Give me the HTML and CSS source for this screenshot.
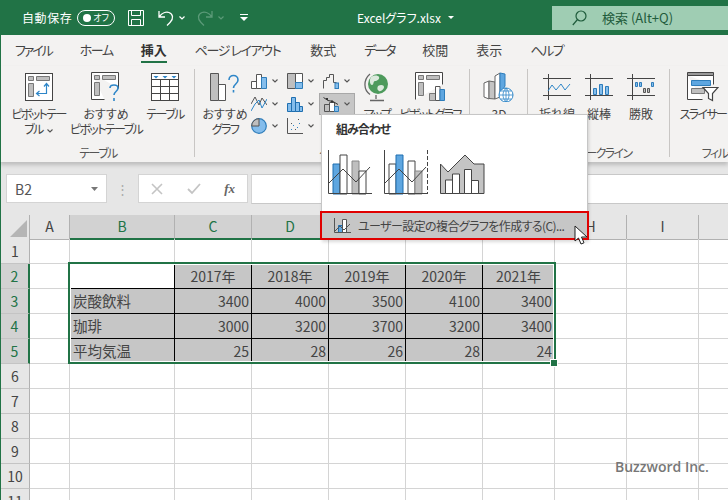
FILE: index.html
```html
<!DOCTYPE html>
<html lang="ja">
<head>
<meta charset="utf-8">
<title>Excelグラフ.xlsx</title>
<link rel="stylesheet" href="styles.css">
</head>
<body>
<div class="app">
  <header class="titlebar">
    <span class="autosave">自動保存</span>
    <span class="toggle"><span class="knob"></span><span class="toggle-text">オフ</span></span>
    <svg class="qa-save" width="16" height="16" viewBox="0 0 16 16" fill="none" stroke="#fff"><path d="M.5.5h15v15H.5zM3.500.5v5h9v-5M3.500 15.500v-6h9v6"/></svg>
    <svg class="qa-undo" width="16" height="16" viewBox="0 0 16 16" fill="none" stroke="#fff" stroke-width="1.300"><path d="M1 1v6h6M1.500 6.500C4 3 8 1.500 11 2.500c4 1.500 5 6 1 10l-3 3"/></svg>
    <svg class="chev" width="6" height="4" viewBox="0 0 6 4" fill="none" stroke="#fff" stroke-width="1.200"><path d="M.5.500 3 3 5.500.5"/></svg>
    <svg class="qa-redo" width="16" height="16" viewBox="0 0 16 16" fill="none" stroke="#5b9a78" stroke-width="1.300"><path d="M15 1v6H9M14.500 6.500C12 3 8 1.500 5 2.500 1 4 0 8.500 4 12.500l3 3"/></svg>
    <svg class="chev" width="6" height="4" viewBox="0 0 6 4" fill="none" stroke="#5b9a78" stroke-width="1.200"><path d="M.5.500 3 3 5.500.5"/></svg>
    <svg class="qa-more" width="8" height="7" viewBox="0 0 8 7" fill="#fff"><path d="M0 0h8v1H0zM0 3h8L4 7z"/></svg>
    <span class="filename">Excelグラフ.xlsx</span>
    <svg class="file-arrow" width="6" height="3" viewBox="0 0 6 3" fill="#fff"><path d="M0 0h6L3 3z"/></svg>
    <div class="search">
      <svg width="15" height="16" viewBox="0 0 15 16" fill="none" stroke="#1f5c3c" stroke-width="1.200"><circle cx="9" cy="6" r="5"/><path d="M5.500 9.500 .8 15"/></svg>
      <span class="search-text">検索 (Alt+Q)</span>
    </div>
  </header>

  <nav class="tabs">
    <span class="tab k2">ファイル</span>
    <span class="tab k">ホーム</span>
    <span class="tab active">挿入</span>
    <span class="tab k tab-gap">ページ レイアウト</span>
    <span class="tab">数式</span>
    <span class="tab k2">データ</span>
    <span class="tab">校閲</span>
    <span class="tab">表示</span>
    <span class="tab k">ヘルプ</span>
  </nav>

  <section class="ribbon">
    <div class="group g-table">
      <div class="group-body">
        <div class="bigbtn w-pivot">
          <svg width="28" height="28" viewBox="0 0 28 28"><rect x=".5" y=".5" width="27" height="27" fill="#fff" stroke="#444"/><path d="M3.500 3.500h5v4h-5zM11.500 3.500h13v4h-13zM3.500 10.500h5v13h-5z" fill="#bfbfbf" stroke="#777"/><path d="M12 20.500h9.500V11M19 13.500l2.500-3 2.500 3M14.500 18l-3 2.500 3 2.500" fill="none" stroke="#2e86c8" stroke-width="1.200"/></svg>
          <span class="lbl lk">ピボットテー<br>ブル <svg class="lbl-chev" width="6" height="4" viewBox="0 0 6 4" fill="none" stroke="#555" stroke-width="1.100"><path d="M.5.500 3 3 5.500.5"/></svg></span>
        </div>
        <div class="bigbtn w-recpivot">
          <svg width="30" height="30" viewBox="0 0 30 30"><path d="M.5.5h27v16M.5.5v27h13" fill="#fff" stroke="#444"/><path d="M3.500 3.500h5v4h-5zM11.500 3.500h13v4h-13zM3.500 10.500h5v13h-5z" fill="#bfbfbf" stroke="#777"/><path d="M19 16c0-4 8-4 8 0 0 3.500-4 3.500-4 7M23 26v3" fill="none" stroke="#2e86c8" stroke-width="1.600"/></svg>
          <span class="lbl">おすすめ<br><span class="lk">ピボットテーブル</span></span>
        </div>
        <div class="bigbtn w-table">
          <svg width="28" height="28" viewBox="0 0 28 28"><rect x=".5" y=".5" width="27" height="27" fill="#fff" stroke="#444"/><path d="M.5 6.500h27M.5 13.500h27M.5 20.500h27M9.500 6.500v21M18.500 6.500v21" stroke="#444" fill="none"/><path d="M2.500 3h5L5 5.500zM11.500 3h5L14 5.500zM20.500 3h5L23 5.500z" fill="#2e86c8"/></svg>
          <span class="lbl lk">テーブル</span>
        </div>
      </div>
      <span class="group-label lk">テーブル</span>
    </div>

    <div class="group g-chart">
      <div class="group-body">
        <div class="bigbtn w-recchart">
          <svg width="30" height="28" viewBox="0 0 30 28"><path d="M.5.500h8v27h-8z" fill="#bfbfbf" stroke="#555"/><path d="M8.500 11.500h7v16h-7z" fill="#fff" stroke="#555"/><path d="M19 7c0-6 9-6 9 0 0 4-4.500 4-4.500 8M23.500 17v2.500" fill="none" stroke="#2e86c8" stroke-width="1.600"/></svg>
          <span class="lbl">おすすめ<br><span class="lk">グラフ</span></span>
        </div>
        <div class="smallgrid">
          <div class="smallbtn">
            <svg width="16" height="16" viewBox="0 0 16 16"><path d="M.5 8.500h5v7h-5z" fill="#fff" stroke="#555"/><path d="M5.500 1.500h5v14h-5z" fill="#fff" stroke="#555"/><path d="M10.500 4.500h5v11h-5z" fill="#84bdec" stroke="#2e7dba"/></svg>
            <svg class="sm-chev" width="6" height="4" viewBox="0 0 6 4" fill="none" stroke="#555" stroke-width="1.100"><path d="M.5.500 3 3 5.500.5"/></svg>
          </div>
          <div class="smallbtn">
            <svg width="16" height="16" viewBox="0 0 16 16"><path d="M.5.500h8v15h-8z" fill="#bfbfbf" stroke="#555"/><path d="M8.500.500h7v9h-7z" fill="#fff" stroke="#555"/><path d="M8.500 9.500h7v6h-7z" fill="#84bdec" stroke="#2e7dba"/></svg>
            <svg class="sm-chev" width="6" height="4" viewBox="0 0 6 4" fill="none" stroke="#555" stroke-width="1.100"><path d="M.5.500 3 3 5.500.5"/></svg>
          </div>
          <div class="smallbtn">
            <svg width="16" height="16" viewBox="0 0 16 16" fill="none"><path d="M.5 15.500v-8h3v-3h3v-3h4v8h3" stroke="#555"/><rect x="12" y="10" width="3.500" height="5.500" fill="#84bdec" stroke="#2e7dba"/></svg>
            <svg class="sm-chev" width="6" height="4" viewBox="0 0 6 4" fill="none" stroke="#555" stroke-width="1.100"><path d="M.5.500 3 3 5.500.5"/></svg>
          </div>
          <div class="smallbtn">
            <svg width="16" height="16" viewBox="0 0 16 16" fill="none"><path d="M0 8 4 1l4 8 3-7 5 7" stroke="#555"/><path d="M0 15 4 8l4-4 3 8 5-9" stroke="#2e86c8"/></svg>
            <svg class="sm-chev" width="6" height="4" viewBox="0 0 6 4" fill="none" stroke="#555" stroke-width="1.100"><path d="M.5.500 3 3 5.500.5"/></svg>
          </div>
          <div class="smallbtn">
            <svg width="16" height="16" viewBox="0 0 16 16"><path d="M.5 7.500h4v8h-4zM4.500 1.500h4v14h-4zM8.500 6.500h4v9h-4zM12.500 10.500h3v5h-3z" fill="#84bdec" stroke="#1f6fb0"/></svg>
            <svg class="sm-chev" width="6" height="4" viewBox="0 0 6 4" fill="none" stroke="#555" stroke-width="1.100"><path d="M.5.500 3 3 5.500.5"/></svg>
          </div>
          <div class="smallbtn selected">
            <svg width="16" height="16" viewBox="0 0 16 16" fill="none"><path d="M1.500 8.500h5v7h-5z" fill="#bfbfbf" stroke="#555"/><path d="M6.500 6.500h5v9h-5z" fill="#fff" stroke="#555"/><path d="M11.500 10.500h4v5h-4z" fill="#84bdec" stroke="#2e7dba"/><path d="M.5 1.500 5 4.500l5 1 5 3" stroke="#333"/><path d="M3 2h2v2H3zM8 4.500h2v2H8z" fill="#333"/></svg>
            <svg class="sm-chev" width="6" height="4" viewBox="0 0 6 4" fill="none" stroke="#555" stroke-width="1.100"><path d="M.5.500 3 3 5.500.5"/></svg>
          </div>
          <div class="smallbtn">
            <svg width="16" height="16" viewBox="0 0 16 16"><circle cx="8" cy="8" r="7.300" fill="#84bdec" stroke="#2e7dba" stroke-width="1.200"/><path d="M8 8V.7A7.300 7.300 0 0 0 .7 8z" fill="#bfbfbf" stroke="#555"/></svg>
            <svg class="sm-chev" width="6" height="4" viewBox="0 0 6 4" fill="none" stroke="#555" stroke-width="1.100"><path d="M.5.500 3 3 5.500.5"/></svg>
          </div>
          <div class="smallbtn">
            <svg width="16" height="16" viewBox="0 0 16 16"><path d="M.5 0v15.500H16" fill="none" stroke="#555"/><path d="M4 11h1v1H4zM6 7h1v1H6zM10 9h1v1h-1zM12 5h1v1h-1z" fill="#2e86c8"/><path d="M8 11h1v1H8zM4 5h1v1H4zM11 1h1v1h-1z" fill="#555"/></svg>
            <svg class="sm-chev" width="6" height="4" viewBox="0 0 6 4" fill="none" stroke="#555" stroke-width="1.100"><path d="M.5.500 3 3 5.500.5"/></svg>
          </div>
        </div>
        <div class="bigbtn w-map">
          <svg width="26" height="30" viewBox="0 0 26 30"><circle cx="14" cy="12" r="10" fill="#4d9a5c"/><path d="M7 5c3-2 7-2 8 0s-2 4-4 4-1 4-3 4-3-5-1-8zM14 14c3-2 6-1 6 1s-3 5-5 4-2-3-1-5z" fill="#dbe9dd"/><path d="M6 2C-1 8-.5 18 6 22.500M12 23v4M6 28.500h14" fill="none" stroke="#666" stroke-width="1.300"/></svg>
          <span class="lbl lk">マップ</span>
        </div>
        <div class="bigbtn w-pchart">
          <svg width="30" height="30" viewBox="0 0 30 30"><path d="M.5 27.500V.5h27v12" fill="#fff" stroke="#444"/><path d="M3.500 3.500h5v4h-5zM11.500 3.500h13v4h-13zM3.500 10.500h5v13h-5z" fill="#bfbfbf" stroke="#777"/><path d="M14.500 21.500h6v7h-6z" fill="#bfbfbf" stroke="#777"/><path d="M20.500 14.500h4.500v14h-4.500z" fill="#fff" stroke="#555"/><path d="M25 17.500h4.500v11H25z" fill="#5ea6e0" stroke="#2e7dba"/></svg>
          <span class="lbl lk">ピボットグラフ</span>
        </div>
      </div>
      <span class="group-label lk">グラフ</span>
    </div>

    <div class="group g-3d">
      <div class="group-body">
        <div class="bigbtn w-3d">
          <svg width="32" height="30" viewBox="0 0 32 30"><path d="M1 11l5-2v18l-5-2z" fill="#fff" stroke="#666"/><path d="M6 9l6 1v17l-6-.5z" fill="#c4c4c4" stroke="#666"/><path d="M12 4l5-3v24l-5 2z" fill="#fff" stroke="#666"/><path d="M17 1l5 1v12l-5 8z" fill="#5ea6e0" stroke="#2e7dba"/><circle cx="23" cy="23" r="7" fill="#fff" stroke="#2e86c8"/><path d="M16 23h14M18 19h10M18 27h10M23 16v14M23 16c-4 4-4 10 0 14M23 16c4 4 4 10 0 14" fill="none" stroke="#2e86c8" stroke-width=".8"/></svg>
          <span class="lbl">3D</span>
        </div>
      </div>
    </div>

    <div class="group g-spark">
      <div class="group-body">
        <div class="bigbtn w-spark">
          <svg width="28" height="26" viewBox="0 0 28 26" fill="none"><path d="M0 4.500h28M0 21.500h28M5.500 0v26" stroke="#444"/><path d="M5 17 9 11l4 5 5-6 4 6 5-6" stroke="#2e86c8"/></svg>
          <span class="lbl">折れ線</span>
        </div>
        <div class="bigbtn w-spark2">
          <svg width="28" height="26" viewBox="0 0 28 26"><path d="M0 4.500h28M0 21.500h28M5.500 0v26" fill="none" stroke="#444"/><path d="M8.500 14.500h3v6h-3zM14.500 10.500h3v10h-3zM20.500 12.500h3v8h-3z" fill="#84bdec" stroke="#2e7dba"/></svg>
          <span class="lbl">縦棒</span>
        </div>
        <div class="bigbtn w-spark3">
          <svg width="28" height="26" viewBox="0 0 28 26"><path d="M0 4.500h28M0 21.500h28M5.500 0v26" fill="none" stroke="#444"/><path d="M8.500 8.500h2v4h-2zM12.500 8.500h2v4h-2zM24.500 8.500h2v4h-2z" fill="#84bdec" stroke="#2e7dba"/><path d="M16.500 14.500h2v4h-2zM20.500 14.500h2v4h-2z" fill="#bfbfbf" stroke="#555"/></svg>
          <span class="lbl">勝敗</span>
        </div>
      </div>
      <span class="group-label lk">スパークライン</span>
    </div>

    <div class="group g-filter">
      <div class="group-body">
        <div class="bigbtn w-slicer">
          <svg width="32" height="30" viewBox="0 0 32 30"><path d="M.5.500h26v3h-26z" fill="#999" stroke="#444"/><path d="M.5 3.500h26v9M.5 3.500v24h15" fill="#fff" stroke="#444"/><path d="M4.500 8.500h19v5h-19z" fill="#5ea6e0" stroke="#2e7dba"/><path d="M4.500 16.500h13v5h-13z" fill="#bfbfbf" stroke="#777"/><path d="M16 15.500h15l-5.500 6v7l-4-2v-5z" fill="#fff" stroke="#444" stroke-width="1.200"/></svg>
          <span class="lbl lk">スライサー</span>
        </div>
      </div>
      <span class="group-label lk">フィルター</span>
    </div>
  </section>

  <section class="formulabar">
    <div class="namebox"><span>B2</span><svg width="7" height="4" viewBox="0 0 7 4" fill="#777"><path d="M0 0h7L3.500 4z"/></svg></div>
    <span class="fb-dots">⋮</span>
    <div class="fb-buttons">
      <svg width="12" height="12" viewBox="0 0 12 12" fill="none" stroke="#c4c4c4" stroke-width="1.600"><path d="M1 1l10 10M11 1 1 11"/></svg>
      <svg width="14" height="12" viewBox="0 0 14 12" fill="none" stroke="#c4c4c4" stroke-width="1.800"><path d="M1 6l4 4 8-9"/></svg>
      <span class="fx">fx</span>
    </div>
    <div class="fb-input"></div>
  </section>

  <section class="sheet">
    <div class="row head">
      <div class="rh corner"><svg width="17" height="17" viewBox="0 0 17 17" fill="#b5b5b5"><path d="M17 0v17H0z"/></svg></div>
      <div class="ch">A</div><div class="ch on">B</div><div class="ch on">C</div><div class="ch on">D</div><div class="ch on"></div><div class="ch on"></div><div class="ch on"></div><div class="ch">H</div><div class="ch">I</div><div class="ch"></div>
    </div>
    <div class="row"><div class="rh">1</div><div class="c"></div><div class="c"></div><div class="c"></div><div class="c"></div><div class="c"></div><div class="c"></div><div class="c"></div><div class="c"></div><div class="c"></div><div class="c"></div></div>
    <div class="row"><div class="rh on">2</div><div class="c"></div><div class="c d white"></div><div class="c d yr">2017年</div><div class="c d yr">2018年</div><div class="c d yr">2019年</div><div class="c d yr">2020年</div><div class="c d yr">2021年</div><div class="c"></div><div class="c"></div><div class="c"></div></div>
    <div class="row"><div class="rh on">3</div><div class="c"></div><div class="c d name">炭酸飲料</div><div class="c d n">3400</div><div class="c d n">4000</div><div class="c d n">3500</div><div class="c d n">4100</div><div class="c d n">3400</div><div class="c"></div><div class="c"></div><div class="c"></div></div>
    <div class="row"><div class="rh on">4</div><div class="c"></div><div class="c d name">珈琲</div><div class="c d n">3000</div><div class="c d n">3200</div><div class="c d n">3700</div><div class="c d n">3200</div><div class="c d n">3400</div><div class="c"></div><div class="c"></div><div class="c"></div></div>
    <div class="row"><div class="rh on">5</div><div class="c"></div><div class="c d name">平均気温</div><div class="c d n">25</div><div class="c d n">28</div><div class="c d n">26</div><div class="c d n">28</div><div class="c d n">24</div><div class="c"></div><div class="c"></div><div class="c"></div></div>
    <div class="row"><div class="rh">6</div><div class="c"></div><div class="c"></div><div class="c"></div><div class="c"></div><div class="c"></div><div class="c"></div><div class="c"></div><div class="c"></div><div class="c"></div><div class="c"></div></div>
    <div class="row"><div class="rh">7</div><div class="c"></div><div class="c"></div><div class="c"></div><div class="c"></div><div class="c"></div><div class="c"></div><div class="c"></div><div class="c"></div><div class="c"></div><div class="c"></div></div>
    <div class="row"><div class="rh">8</div><div class="c"></div><div class="c"></div><div class="c"></div><div class="c"></div><div class="c"></div><div class="c"></div><div class="c"></div><div class="c"></div><div class="c"></div><div class="c"></div></div>
    <div class="row"><div class="rh">9</div><div class="c"></div><div class="c"></div><div class="c"></div><div class="c"></div><div class="c"></div><div class="c"></div><div class="c"></div><div class="c"></div><div class="c"></div><div class="c"></div></div>
    <div class="row"><div class="rh">10</div><div class="c"></div><div class="c"></div><div class="c"></div><div class="c"></div><div class="c"></div><div class="c"></div><div class="c"></div><div class="c"></div><div class="c"></div><div class="c"></div></div>
    <div class="row"><div class="rh">11</div><div class="c"></div><div class="c"></div><div class="c"></div><div class="c"></div><div class="c"></div><div class="c"></div><div class="c"></div><div class="c"></div><div class="c"></div><div class="c"></div></div>
    <div class="selection"><span class="handle"></span></div>
  </section>

  <div class="popup">
    <div class="popup-title">組み合わせ</div>
    <div class="popup-charts">
      <svg width="46" height="46" viewBox="0 0 46 46" fill="none"><path d="M5 14h7v30H5z" fill="#5ea6e0" stroke="#1f6fb0"/><path d="M12 5h7v39h-7z" fill="#fff" stroke="#444"/><path d="M24 11h7v33h-7z" fill="#bfbfbf" stroke="#888"/><path d="M31 21h7v23h-7z" fill="#fff" stroke="#444"/><path d="M.5 0v43.500H44" stroke="#444"/><path d="M0 34 15 19l13 13 14-15" stroke="#444"/></svg>
      <svg width="46" height="46" viewBox="0 0 46 46" fill="none"><path d="M5 14h7v30H5z" fill="#fff" stroke="#444"/><path d="M12 5h7v39h-7z" fill="#5ea6e0" stroke="#1f6fb0"/><path d="M24 11h7v33h-7z" fill="#fff" stroke="#444"/><path d="M31 21h7v23h-7z" fill="#bfbfbf" stroke="#888"/><path d="M.5 0v43.500H44" stroke="#444"/><path d="M43.500 0v44" stroke="#444" stroke-dasharray="4 2"/><path d="M0 34 15 19l13 13 14-15" stroke="#444"/></svg>
      <svg width="46" height="46" viewBox="0 0 46 46" fill="none"><path d="M.5 14 8 22 25 5l9 9h10v29.500H.5z" fill="#c4c4c4" stroke="#444"/><path d="M5.500 30h7v13.500h-7zM12.500 24h7v19.500h-7zM24.500 19.500h7v24h-7zM31.500 30.500h7v13h-7z" fill="#fff" stroke="#444"/></svg>
    </div>
    <div class="popup-item">
      <svg width="17" height="16" viewBox="0 0 17 16" fill="none"><path d="M4.500 7.500h4v7h-4z" fill="#5ea6e0" stroke="#1f6fb0"/><path d="M8.500 1.500h4v13h-4z" fill="#fff" stroke="#555"/><path d="M.5 0v14.500H17" stroke="#555"/><path d="M1 13l5-5 4 4 6-6" stroke="#555"/></svg>
      <span>ユーザー設定の複合グラフを作成する(C)...</span>
    </div>
  </div>

  <svg class="cursor" width="15" height="21" viewBox="0 0 15 21"><path d="M1 1v15l3.500-3 2.500 6 3-1.200-2.500-5.800H13z" fill="#fff" stroke="#222"/></svg>
  <span class="watermark">Buzzword Inc.</span>
</div>
</body>
</html>
```
FILE: styles.css
```css
* { box-sizing: border-box; }
html, body { margin: 0; padding: 0; }
body { width: 728px; height: 500px; overflow: hidden; background: #fff; }
.app {
  position: relative; width: 728px; height: 500px; overflow: hidden;
  font-family: "Noto Sans CJK JP", "Noto Sans", sans-serif;
  font-feature-settings: "palt"; color: #444; font-size: 12px;
}

/* title bar */
.titlebar {
  height: 35px; background: #217346; color: #fff; display: flex; align-items: center;
  padding-left: 22px; font-size: 12px;
}
.autosave { width: 55px; letter-spacing: .6px; white-space: nowrap; }
.toggle {
  width: 38px; height: 16px; border: 1px solid #fff; border-radius: 8px; display: flex;
  align-items: center; padding: 0 5px 0 5px; justify-content: space-between;
}
.knob { width: 8px; height: 8px; background: #fff; border-radius: 50%; }
.toggle-text { font-size: 9px; line-height: 1; }
.qa-save { margin-left: 13px; }
.qa-undo { margin-left: 14px; }
.chev { margin-left: 5px; }
.qa-redo { margin-left: 12px; }
.qa-more { margin-left: 16px; }
.filename { margin-left: 109px; font-size: 12px; white-space: nowrap; }
.file-arrow { margin-left: 7px; }
.search {
  margin-left: auto; width: 176px; height: 24px; background: #9fcdb3; color: #1f5c3c;
  display: flex; align-items: center; padding-left: 20px; gap: 15px;
}
.search-text { font-size: 13px; white-space: nowrap; }

/* tabs */
.tabs {
  height: 31px; background: #f3f2f1; border-left: 1px solid #217346; display: flex;
  padding-left: 14px; gap: 28px; font-size: 13px; color: #444;
}
.tab { height: 31px; line-height: 30px; white-space: nowrap; position: relative; }
.tab.k { letter-spacing: -1.4px; }
.tab.k2 { letter-spacing: -2.1px; }
.tab-gap { margin-right: 2px; }
.tab.active { font-weight: 700; color: #333; }
.tab.active::after {
  content: ""; position: absolute; left: 0; right: 0; bottom: 3px; height: 2px; background: #217346;
}

/* ribbon */
.ribbon {
  height: 96px; background: #f3f2f1; border-left: 1px solid #217346; display: flex;
  box-shadow: 0 3px 4px rgba(0,0,0,.18); position: relative; z-index: 1; overflow: hidden;
}
.group { position: relative; display: flex; flex-direction: column; align-items: center; height: 96px; flex: none; }
.group::after {
  content: ""; position: absolute; right: 0; top: 3px; height: 88px; width: 1px; background: #c8c6c4;
}
.g-filter::after { display: none; }
.group-body { height: 77px; display: flex; width: 100%; }
.group-label { font-size: 12px; line-height: 20px; color: #555; white-space: nowrap; }
.lk { letter-spacing: -1.6px; }
.g-table { width: 194px; }
.g-chart { width: 275px; }
.g-3d { width: 58px; }
.g-spark { width: 142px; }
.g-filter { width: 108px; }
.bigbtn {
  display: flex; flex-direction: column; align-items: center; padding-top: 6px; flex: none;
  height: 77px;
}
.bigbtn > svg { height: 30px; flex: none; }
.lbl {
  font-size: 12px; line-height: 15px; text-align: center; white-space: nowrap; margin-top: 4px; color: #444;
}
.lbl-chev { vertical-align: middle; margin-left: 3px; }
.w-pivot { width: 75px; }
.w-recpivot { width: 60px; }
.w-table { width: 58px; }
.w-recchart { width: 60px; }
.smallgrid {
  display: grid; grid-template-columns: repeat(3, 36px); grid-auto-rows: 22.5px; flex: none;
  padding-top: 4px; margin-left: -8px; height: 77px;
}
.smallbtn { display: flex; align-items: center; gap: 3px; padding-left: 4px; }
.smallbtn.selected { background: #c6c6c6; outline: 1px solid #a8a8a8; outline-offset: -1px; }
.sm-chev { margin-left: 2px; }
.w-map { width: 30px; margin-left: 7px; }
.w-pchart { width: 76px; }
.w-3d { width: 58px; }
.w-spark { width: 42px; margin-left: 8px; }
.w-spark2 { width: 42px; }
.w-spark3 { width: 42px; }
.w-slicer { width: 66px; }

/* formula bar */
.formulabar {
  height: 53px; background: #e6e6e6; border-left: 1px solid #217346; display: flex; align-items: center;
  padding-left: 5px;
}
.namebox {
  width: 101px; height: 29px; background: #fff; border: 1px solid #d4d4d4; display: flex;
  align-items: center; justify-content: space-between; padding: 0 8px 0 8px; font-size: 14px; color: #555;
}
.fb-dots { width: 31px; text-align: center; color: #aaa; font-size: 13px; }
.fb-buttons {
  width: 110px; height: 29px; background: #fff; border: 1px solid #d4d4d4; display: flex;
  align-items: center; justify-content: space-between; padding: 0 12px 0 12px;
}
.fx { font-family: "Liberation Serif", serif; font-style: italic; font-weight: 700; font-size: 13px; color: #666; }
.fb-input { flex: 1; height: 30px; margin-left: 3px; background: #fff; border-top: 1px solid #c8c8c8; border-bottom: 1px solid #c8c8c8; border-left: 1px solid #d4d4d4; }

/* sheet */
.sheet { position: relative; border-left: 1px solid #217346; height: 285px; overflow: hidden; }
.row {
  display: grid; height: 25px;
  grid-template-columns: 29px 40px 105px 77px 77px 77px 77px 72px 72px 72px 72px;
}
.row.head { height: 24px; }
.rh {
  background: #e6e6e6; border-right: 1px solid #b1b1b1; border-bottom: 1px solid #c4c4c4;
  text-align: center; line-height: 24px; font-size: 14px; color: #444;
}
.rh.on { background: #d2d2d2; color: #217346; border-right: 2px solid #217346; }
.corner { display: flex; align-items: flex-end; justify-content: flex-end; padding: 0 2px 2px 0; }
.ch {
  background: #e6e6e6; border-right: 1px solid #b1b1b1; border-bottom: 1px solid #b1b1b1;
  text-align: center; line-height: 23px; font-size: 14px; color: #444;
}
.ch.on { background: #d2d2d2; color: #217346; border-bottom: 2px solid #217346; }
.c { border-right: 1px solid #d4d4d4; border-bottom: 1px solid #d4d4d4; font-size: 14px; line-height: 24px; color: #444; white-space: nowrap; }
.d { background: #c6c6c6; border-right: 1px solid #000; border-bottom: 1px solid #000; padding: 0 2px; }
.white { background: #fff; }
.yr { text-align: center; }
.n { text-align: right; }
.name { font-size: 14.5px; padding-left: 3px; }
.selection {
  position: absolute; left: 67px; top: 47px; width: 488px; height: 102px;
  border: 2px solid #217346; outline: 1px solid #fff; outline-offset: -3px; pointer-events: none;
}
.handle {
  position: absolute; right: -3px; bottom: -4px; width: 6px; height: 6px; background: #217346;
  box-shadow: 0 0 0 1px #fff;
}

/* popup */
.popup {
  position: absolute; left: 321px; top: 114px; width: 267px; height: 126px; background: #fff;
  border: 1px solid #c6c6c6; z-index: 3; box-shadow: 1px 2px 3px rgba(0,0,0,.15);
  display: flex; flex-direction: column;
}
.popup-title { font-weight: 700; font-size: 12px; color: #333; padding: 5px 0 0 14px; line-height: 18px; letter-spacing: -1px; }
.popup-charts { display: flex; gap: 10px; padding: 12px 0 0 6px; height: 73px; }
.popup-item {
  margin: auto -2px -1px -2px; height: 29px; background: #c6c6c6; border: 2px solid #e00000;
  display: flex; align-items: center; padding-left: 12px; gap: 7px; font-size: 12px; color: #444; white-space: nowrap;
  letter-spacing: -.6px;
}
.cursor { position: absolute; left: 574px; top: 225px; z-index: 4; }
.watermark {
  position: absolute; left: 615px; top: 457px; font-family: "Open Sans", sans-serif; font-weight: 600;
  font-size: 14px; color: #777; white-space: nowrap; z-index: 2; letter-spacing: 0;
}
```
